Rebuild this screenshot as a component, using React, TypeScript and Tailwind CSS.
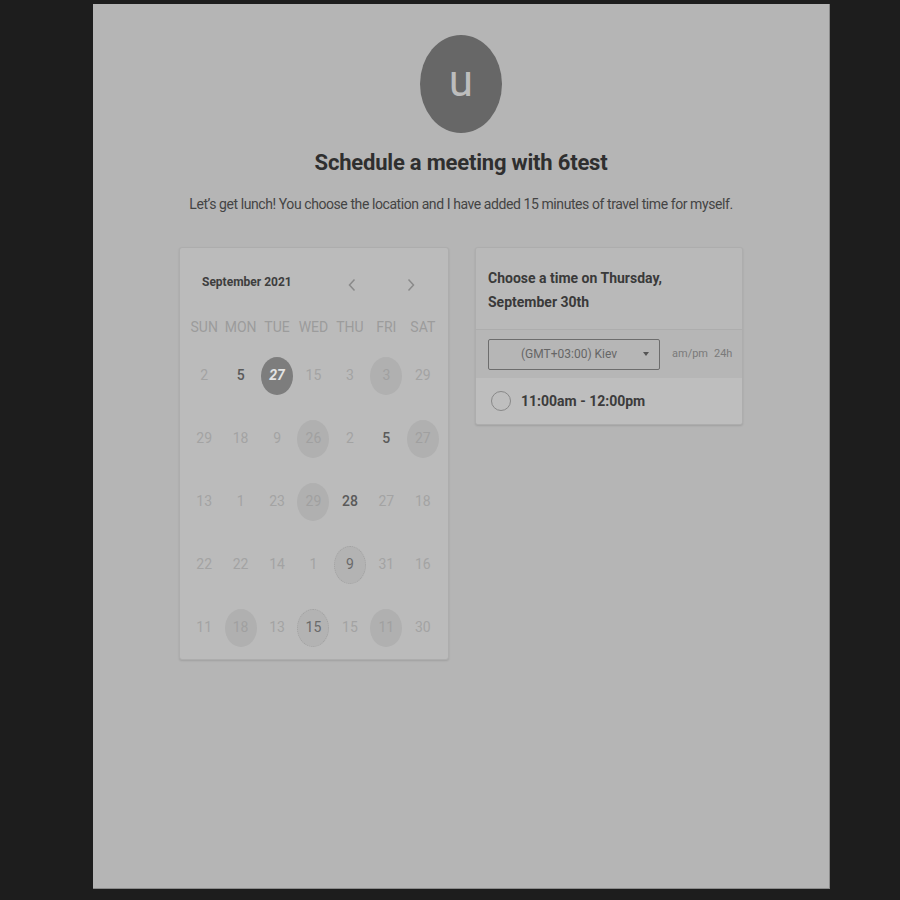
import React from 'react';

type Day = { n: number; kind?: 'sel' | 'soft' | 'dot'; bold?: boolean };

const weeks: Day[][] = [
  [{ n: 2 }, { n: 5, bold: true }, { n: 27, kind: 'sel' }, { n: 15 }, { n: 3 }, { n: 3, kind: 'soft' }, { n: 29 }],
  [{ n: 29 }, { n: 18 }, { n: 9 }, { n: 26, kind: 'soft' }, { n: 2 }, { n: 5, bold: true }, { n: 27, kind: 'soft' }],
  [{ n: 13 }, { n: 1 }, { n: 23 }, { n: 29, kind: 'soft' }, { n: 28, bold: true }, { n: 27 }, { n: 18 }],
  [{ n: 22 }, { n: 22 }, { n: 14 }, { n: 1 }, { n: 9, kind: 'dot' }, { n: 31 }, { n: 16 }],
  [{ n: 11 }, { n: 18, kind: 'soft' }, { n: 13 }, { n: 15, kind: 'dot' }, { n: 15 }, { n: 11, kind: 'soft' }, { n: 30 }],
];

const dayNames = ['SUN', 'MON', 'TUE', 'WED', 'THU', 'FRI', 'SAT'];

const DayCell = ({ d }: { d: Day }) => {
  let circle = '';
  let text = 'text-[#a3a3a3]';
  if (d.kind === 'sel') {
    circle = 'bg-[#7d7d7d]';
    text = 'text-[#e4e4e4] font-bold italic';
  } else if (d.kind === 'soft') {
    circle = 'bg-[#b0b0b0]';
    text = 'text-[#a0a0a0]';
  } else if (d.kind === 'dot') {
    circle = 'bg-[#b3b3b3] border border-dotted border-[#a2a2a2]';
    text = 'text-[#6a6a6a]';
  } else if (d.bold) {
    text = 'text-[#5a5a5a] font-medium';
  }
  return (
    <div className="h-[63px] flex items-center justify-center">
      <div className={`w-[32px] h-[38px] rounded-[50%] flex items-center justify-center text-[14px] ${circle} ${text}`}>
        {d.n}
      </div>
    </div>
  );
};

const Chevron = ({ dir }: { dir: 'l' | 'r' }) => (
  <svg width="10" height="14" viewBox="0 0 10 14" fill="none">
    <path
      d={dir === 'l' ? 'M7.5 1.5 L2.5 7 L7.5 12.5' : 'M2.5 1.5 L7.5 7 L2.5 12.5'}
      stroke="#8a8a8a"
      strokeWidth="1.5"
    />
  </svg>
);

export default function App() {
  return (
    <div className="w-[900px] h-[900px] bg-[#1d1d1d] pt-[4px] pl-[93px]" style={{ fontFamily: 'Roboto, "Liberation Sans", sans-serif' }}>
      <div className="w-[737px] h-[885px] bg-[#b5b5b5] border-b border-r border-[#8a8a8a] flex flex-col items-center">
        {/* avatar */}
        <div className="mt-[31px] w-[82px] h-[98px] rounded-[50%] bg-[#676767] flex items-center justify-center">
          <span className="text-[44px] text-[#bdbdbd] leading-none -mt-[6px]">u</span>
        </div>
        <h1 className="mt-[16px] text-[22px] font-bold text-[#2f2f2f] leading-[28px] tracking-[-0.2px]">
          Schedule a meeting with 6test
        </h1>
        <p className="mt-[18px] text-[14px] text-[#444444] leading-[18px] tracking-[-0.42px]">
          Let’s get lunch! You choose the location and I have added 15 minutes of travel time for myself.
        </p>

        <div className="mt-[34px] w-[564px] flex items-start gap-[26px]">
          {/* calendar */}
          <div className="w-[270px] h-[413px] bg-[#bbbbbb] border border-[#adadad] rounded-[3px] shadow-[0_1px_2px_rgba(0,0,0,0.12)] px-[6px] pr-[7px]">
            <div className="flex items-center h-[65px] pt-[3px]">
              <span className="ml-[16px] text-[12px] font-bold text-[#3e3e3e]">September 2021</span>
              <div className="ml-[55px] flex items-center gap-[49px] mt-[6px]">
                <Chevron dir="l" />
                <Chevron dir="r" />
              </div>
            </div>
            <div className="grid grid-cols-7 h-[28px] items-center">
              {dayNames.map((d) => (
                <div key={d} className="text-center text-[14px] text-[#9c9c9c]">{d}</div>
              ))}
            </div>
            <div className="grid grid-cols-7 mt-[3px]">
              {weeks.flat().map((d, i) => (
                <DayCell key={i} d={d} />
              ))}
            </div>
          </div>

          {/* time picker */}
          <div className="w-[268px] bg-[#bbbbbb] border border-[#adadad] rounded-[3px] shadow-[0_1px_2px_rgba(0,0,0,0.12)] overflow-hidden">
            <div className="h-[82px] px-[12px] pt-[18px] bg-[#b9b9b9] border-b border-[#adadad]">
              <div className="text-[14px] font-bold text-[#3a3a3a] leading-[24px]">
                Choose a time on Thursday,
                <br />
                September 30th
              </div>
            </div>
            <div className="h-[48px] flex items-center px-[12px] bg-[#b6b6b6]">
              <div className="w-[172px] shrink-0 h-[31px] border border-[#6d6d6d] rounded-[2px] flex items-center pl-[32px] pr-[10px]">
                <span className="text-[12px] text-[#666666]">(GMT+03:00) Kiev</span>
                <span className="ml-auto w-0 h-0 border-l-[3px] border-r-[3px] border-t-[4px] border-l-transparent border-r-transparent border-t-[#555555]" />
              </div>
              <span className="ml-[12px] text-[11px] text-[#7a7a7a] whitespace-nowrap">am/pm</span>
              <span className="ml-[6px] text-[11px] text-[#7a7a7a]">24h</span>
            </div>
            <div className="h-[46px] flex items-center px-[15px] bg-[#bebebe]">
              <div className="w-[20px] h-[20px] rounded-full border-[1.5px] border-[#888888]" />
              <span className="ml-[10px] text-[14px] font-bold text-[#3c3c3c]">11:00am - 12:00pm</span>
            </div>
          </div>
        </div>
      </div>
    </div>
  );
}
